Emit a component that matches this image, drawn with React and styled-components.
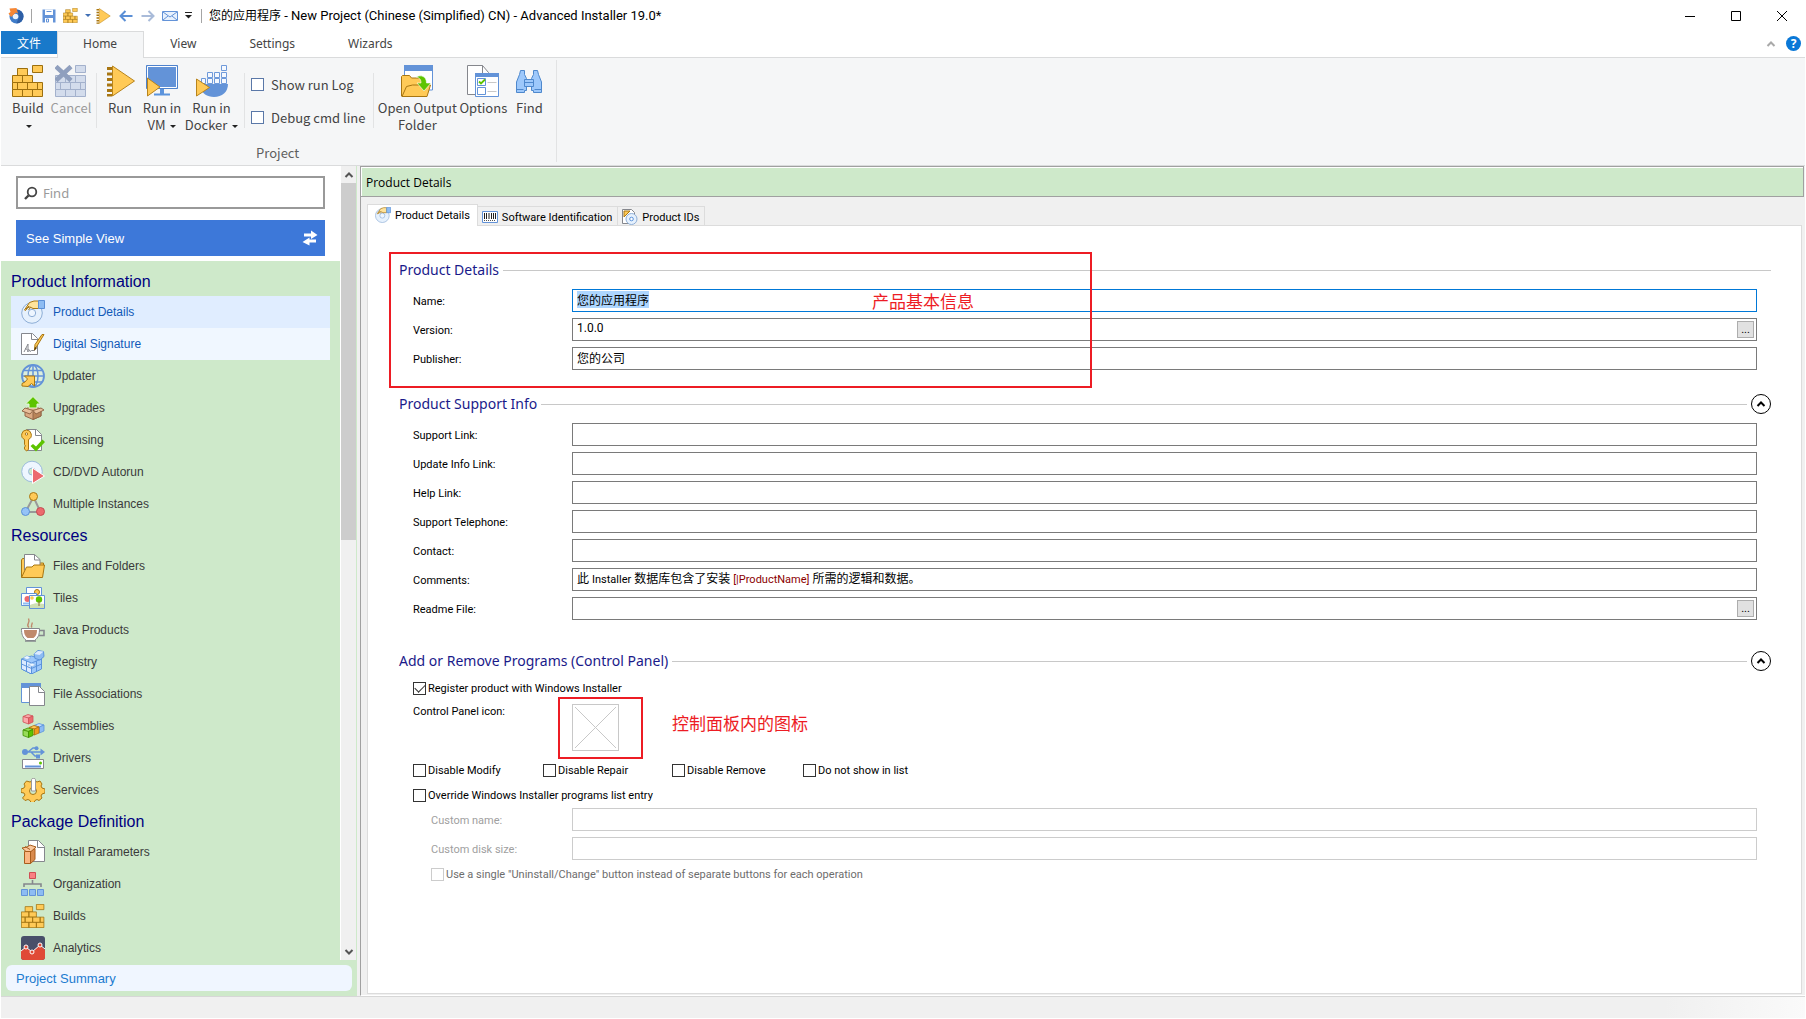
import React, { useEffect, useRef } from 'react'
import styled, { createGlobalStyle, css } from 'styled-components'

const GlobalStyle = createGlobalStyle`
  * { box-sizing: border-box; }

  body {
    margin: 0;
    background: #fff;
    color: #000;
    font-family: Roboto, "Noto Sans CJK SC", sans-serif;
    font-size: 11px;
  }

  button {
    margin: 0;
    padding: 0;
    border: 0;
    background: none;
    color: inherit;
    font: inherit;
  }

  svg { display: block; flex: none; }
`

const GREEN = '#cee9ca'
const BLUE = '#6393d8'
const GOLD = '#ffca57'
const GOLD_DARK = '#a87612'
const GRAY = '#85878d'
const RED = '#ed1c24'

/* ---------- icons ---------- */

function Icon({ size = 24, box = 24, children }) {
  return (
    <svg width={size} height={size} viewBox={`0 0 ${box} ${box}`} fill="none" aria-hidden="true">
      {children}
    </svg>
  )
}

function BricksIcon({ size = 32, fill = GOLD, stroke = '#9c6f0e', crossed }) {
  return (
    <Icon size={size} box={32}>
      <g fill={fill} stroke={stroke}>
        <path d="M20.5 .5h10v7h-10z" />
        {!crossed && <path d="M5.5 3.5h10v7h-10z" />}
        {crossed && <path d="M20.5 10.5h10v7h-10z" />}
        <path d="M.5 10.5h10v7h-10zM10.5 10.5h10v7h-10z" />
        <path d="M.5 17.5h5v7h-5zM5.5 17.5h10v7h-10zM15.5 17.5h10v7h-10zM25.5 17.5h5v7h-5z" />
        <path d="M.5 24.5h10v7h-10zM10.5 24.5h10v7h-10zM20.5 24.5h10v7h-10z" />
      </g>
      {crossed && <path d="M1 1.500l15 14M16 1.500l-15 14" stroke="#8f9fbe" strokeWidth="4.500" />}
    </Icon>
  )
}

function RunIcon({ size = 32 }) {
  return (
    <Icon size={size} box={32}>
      <path d="M3 2h5v3H3zM3 7.500h5v3H3zM3 13h5v3H3zM3 18.500h5v3H3zM3 24h5v3H3zM3 29h5v2.500H3z" fill="#a87612" />
      <path d="M8.500 1l22 15-22 15z" fill={GOLD} stroke="#b8841c" />
    </Icon>
  )
}

const VmIcon = () => (
  <Icon size={32} box={32}>
    <path d="M.5 .5h31v23H.5z" fill={BLUE} stroke="#4f82cc" />
    <path d="M1.500 1.500h29v21h-29z" stroke="#fff" />
    <path d="M14 24h4v5h-4zM8 28.500h16v2H8z" fill="#5b93dc" />
    <path d="M1.500 13l12.500 9-12.500 9z" fill={GOLD} stroke="#b8841c" />
  </Icon>
)

const DockerIcon = () => (
  <Icon size={32} box={32}>
    <path d="M4 19h28c0 8-6 13-14 13-7 0-12-4-14-9z" fill={BLUE} />
    <g fill="#f5f9ff" stroke="#6f9ada">
      <path d="M25.500 .5h5v5h-5zM11.500 7.500h5v5h-5zM18.500 7.500h5v5h-5zM25.500 7.500h5v5h-5z" />
      <path d="M5.500 13.500h4v5h-4zM11.500 13.500h5v5h-5zM18.500 13.500h5v5h-5zM25.500 13.500h5v5h-5z" />
    </g>
    <path d="M.5 14l13 8.500-13 8.500z" fill={GOLD} stroke="#b8841c" />
  </Icon>
)

const OutputIcon = () => (
  <Icon size={32} box={32}>
    <path d="M3.500 1h28v24h-28z" fill="#fff" stroke={BLUE} />
    <path d="M3 0h29v6H3z" fill={BLUE} />
    <path d="M.5 31V11.500l1-1h7l2 2.500h11v18z" fill={GOLD} stroke={GOLD_DARK} />
    <path d="M1 31.500l4.500-10 6-1.500h18l-3.500 11.500z" fill={GOLD} stroke={GOLD_DARK} />
    <path d="M15.500 12c4-2.500 10-1 10 6h4.500l-7 8-7-8h4c0-3-1-5-4.500-6z" fill="#5dc400" stroke="#fff" strokeWidth=".6" />
  </Icon>
)

const OptionsIcon = () => (
  <Icon size={32} box={32}>
    <path d="M.5 .5h15l6 7v22H.5z" fill="#fff" stroke={GRAY} />
    <path d="M15.500 .5v8h6" stroke={GRAY} />
    <path d="M8.500 8.500h23v23h-23z" fill="#fff" stroke={BLUE} />
    <path d="M8 8h24v4H8z" fill={BLUE} />
    <path d="M10.500 13.500h8v7h-8zM10.500 22.500h8v7h-8z" stroke={BLUE} />
    <path d="M12 16.500l2 2 4-4" stroke="#5dc400" strokeWidth="1.800" />
    <path d="M20.500 17.500h9M20.500 26.500h9" stroke="#c8c8c8" />
  </Icon>
)

const BinocularsIcon = () => (
  <Icon size={32} box={32}>
    <g fill="#9dc8fb" stroke="#4e88cd">
      <path d="M8.500 5.500h4v4l2 4v12h-2v2h-8V17l3-7.500z" transform="translate(-1)" />
      <path d="M23.500 5.500h-4v4l-2 4v12h2v2h8V17l-3-7.500z" transform="translate(1)" />
      <path d="M11.500 14.500h9v7h-9z" />
      <path d="M3.500 24.500h7M21.500 24.500h7M11.500 17.500h9" />
    </g>
  </Icon>
)

const DiscHandIcon = ({ size = 24 }) => (
  <Icon size={size}>
    <circle cx="11" cy="13" r="10.300" fill="#e6f1fd" stroke="#8eaed6" />
    <circle cx="11" cy="13" r="3.700" fill="#eef6ff" stroke="#8eaed6" />
    <path d="M3.500 10l5-7.500L13 1h4.500v7.500H12L9 7l-2 .5-2.500 3z" fill="#ffe39b" stroke={GOLD_DARK} />
    <path d="M5 9l3-3M7.500 10l2-2.500" stroke={GOLD_DARK} />
    <path d="M17.500 .5h6v8h-6z" fill="#8dbcf3" stroke="#5b8fd6" />
  </Icon>
)

const SignatureIcon = () => (
  <Icon>
    <path d="M.5 1.500h11l5 5v16H.5z" fill="#fff" stroke={GRAY} />
    <path d="M10.500 1.500v6h6" stroke={GRAY} />
    <path d="M3 20l4-8v8M4 16.500c1 0 3 1 3 3.500M7.500 17l1.500 2.500 1.500-1h3" stroke={GRAY} />
    <path d="M23 2.500L16 14l-2.500 4 .5-5.500L21 2.500z" fill={GOLD} stroke={GOLD_DARK} />
    <path d="M14 15l-1 4 3-3z" fill="#5b3c00" />
  </Icon>
)

const UpdaterIcon = () => (
  <Icon>
    <circle cx="12" cy="12" r="11" stroke={BLUE} strokeWidth="1.800" fill="#dceedd" />
    <ellipse cx="12" cy="12" rx="5" ry="11" stroke={BLUE} strokeWidth="1.500" />
    <path d="M12 1v22M1 12h22M3 6.500h18M3 18h18" stroke={BLUE} strokeWidth="1.500" />
    <path d="M3.500 12h10v10l-3-2.500-3.500 3-6-.5L1 19.500 4 18l2.500-3z" fill={GOLD} stroke={GOLD_DARK} />
  </Icon>
)

const UpgradesIcon = () => (
  <Icon>
    <path d="M4 13l8-3 8 3v7l-8 3.500L4 20z" fill="#dba981" stroke="#93694a" />
    <path d="M12 16l8-3v7l-8 3.500z" fill="#b98459" stroke="#93694a" />
    <path d="M4 12l-3 3 8 3 3-3.500zM20 12l3 2-8 4-3-3.500z" fill="#e8bf9b" stroke="#93694a" />
    <path d="M12 .5L19.500 8H16v4H8V8H4.500z" fill="#5dc400" stroke="#e6f7dc" />
  </Icon>
)

const LicensingIcon = () => (
  <Icon>
    <path d="M5.500 1.500h10l5 5v16h-15z" fill="#fff" stroke={GRAY} />
    <path d="M14.500 1.500v6h6" stroke={GRAY} />
    <path d="M5.500 2a5 5 0 0 1 2 9.500v10l-2 1.500-2-2v-2l1-1-1-1.500v-5A5 5 0 0 1 5.500 2z" fill={GOLD} stroke={GOLD_DARK} />
    <circle cx="5.500" cy="6" r="1.200" fill="#fff" stroke={GOLD_DARK} />
    <path d="M9.500 18l2.500-2 3 2.500 6.500-7 2.500 2.500-9 9.500z" fill="#5dc400" />
  </Icon>
)

const AutorunIcon = () => (
  <Icon>
    <circle cx="11" cy="11.500" r="10.300" fill="#eef6ff" stroke="#9bbbdc" />
    <circle cx="11" cy="11.500" r="3.500" fill={GREEN} stroke="#9bbbdc" />
    <path d="M11.500 8l12 8-12 7.500z" fill="#ec6a6e" stroke="#fff" />
  </Icon>
)

const InstancesIcon = () => (
  <Icon>
    <path d="M12.500 5L4.500 20h15z" stroke="#999" strokeWidth="2" />
    <circle cx="12.500" cy="4.500" r="4" fill={GOLD} stroke={GOLD_DARK} />
    <circle cx="4.500" cy="19.500" r="4" fill="#95c3f7" stroke="#5b8fd6" />
    <circle cx="19.500" cy="19.500" r="4" fill="#ec6a6e" stroke="#c24b50" />
  </Icon>
)

const FilesIcon = () => (
  <Icon>
    <path d="M.5 23V6l1-1.500h4V9h17v5z" fill={GOLD} stroke={GOLD_DARK} />
    <path d="M3.500 16V.5h10l5.500 5v12z" fill="#fff" stroke={GRAY} />
    <path d="M13.500 .5v5.500H19" stroke={GRAY} />
    <path d="M.5 23.500l5-10.500H11l2-2h10.500l-2 12.500z" fill={GOLD} stroke={GOLD_DARK} />
  </Icon>
)

const TilesIcon = () => (
  <Icon>
    <path d="M5.500 1.500h15v11h-15z" fill="#fff" stroke={BLUE} />
    <circle cx="16" cy="6" r="2.500" fill={GOLD} stroke={GOLD_DARK} />
    <path d="M.5 7.500h15v12H.5z" fill="#fff" stroke={BLUE} />
    <circle cx="6.500" cy="13" r="3" fill="#ec6a6e" />
    <path d="M2 16.500h6v2H2z" fill="#8dbcf3" />
    <path d="M8.500 9.500h15v13h-15z" fill="#fff" stroke={BLUE} />
    <path d="M9 19c4-2 9-2 14-1v4H9z" fill="#cfe0b4" />
    <circle cx="11" cy="12" r="1.800" fill={GOLD} />
    <circle cx="18" cy="13.500" r="3.200" fill="#5dc400" />
    <path d="M18 15v5" stroke="#8a6a30" />
  </Icon>
)

const JavaIcon = () => (
  <Icon>
    <path d="M18 12.500h5v5h-5" stroke={GRAY} strokeWidth="1.600" />
    <path d="M.5 10.500h18c0 6-1 9-5 12h-8c-4-3-5-6-5-12z" fill="#fff" stroke={GRAY} />
    <path d="M3 12h13c0 4-1 6-3.500 8h-6C4 18 3 16 3 12z" fill="#c08a6c" />
    <path d="M8 9.500c-4-3 2-4-.5-9M11 9.500c-2-2 1-3 0-5" stroke="#c08a6c" strokeWidth="1.400" />
    <path d="M4 23h11" stroke={GRAY} strokeWidth="1.500" />
  </Icon>
)

const RegistryIcon = () => (
  <Icon>
    <path d="M.5 9l10-3 10 3v10l-10 5-10-5z" fill="#9dc8fb" stroke="#5b93dc" />
    <path d="M.5 9l10 4v11l-10-5z" fill="#dceaff" stroke="#5b93dc" />
    <path d="M10.500 13l10-4M5.500 11v10.500M15.500 11v10.500M.5 14l10 4.500 10-4.500" stroke="#5b93dc" />
    <path d="M2 8l4-2.500L10 8 6 9.500zM7 15l4-2 4 2-4 1.500z" fill="#eef6ff" stroke="#7caee8" strokeWidth=".6" />
    <path d="M13 4l4-3.500 5.500 1 .5 5-4 3.500-5-1.500z" fill="#8dbcf3" stroke="#5b93dc" />
    <path d="M13 4l4-3 5.500 .5L18.500 5z" fill="#dceaff" />
  </Icon>
)

const AssociationsIcon = () => (
  <Icon>
    <path d="M.5 2.500h19v18H.5z" fill="#fff" stroke={BLUE} />
    <path d="M0 1h20v5H0z" fill={BLUE} />
    <path d="M8.500 4.500h10l5 5v14h-15z" fill="#fff" stroke={GRAY} />
    <path d="M17.500 4.500v6h6" stroke={GRAY} />
  </Icon>
)

function Cube({ x, y, light, mid, dark }) {
  return (
    <g transform={`translate(${x} ${y})`} stroke={dark} strokeWidth=".8">
      <path d="M0 2.500L5 .5l5 1.500-5 2z" fill={light} />
      <path d="M0 2.500L5.500 4v6L0 8z" fill={light} />
      <path d="M5.500 4L10 2v6l-4.500 2z" fill={mid} />
    </g>
  )
}

const AssembliesIcon = () => (
  <Icon>
    <Cube x={2} y={0} light="#fba9ab" mid="#ec6a6e" dark="#cf5257" />
    <Cube x={13} y={9} light="#c6dfff" mid="#8dbcf3" dark="#5b93dc" />
    <Cube x={8} y={11} light="#ffca57" mid="#f09a1c" dark="#b56f0c" />
    <Cube x={2} y={13.500} light="#97dc58" mid="#5dc400" dark="#3f8f00" />
  </Icon>
)

const DriversIcon = () => (
  <Icon>
    <path d="M3 6h18M7 6l5-4h4M10 6l4 4h3" stroke={BLUE} strokeWidth="1.500" />
    <circle cx="4" cy="6" r="3" fill={BLUE} />
    <path d="M19.500 2.500L24 6l-4.500 3.500z" fill={BLUE} />
    <circle cx="15.500" cy="2.300" r="2" fill={BLUE} />
    <path d="M15 8.500h4v4h-4z" fill={BLUE} />
    <path d="M1.500 13.500h21v9h-21z" fill="#fff" stroke={GRAY} />
    <path d="M4 19.500h16v2H4z" fill={BLUE} />
    <circle cx="19.500" cy="17" r="1.500" fill="#5dc400" />
  </Icon>
)

const ServicesIcon = () => (
  <Icon>
    <path
      d="M9 4l2-1h3l2 1 3-1 2 3-1 2 1 2 3 1v4l-3 1-1 2 1 2-3 2.500-2-1-2 1-1 2h-3l-1-2-2-1-3 1-2.500-2.500L4 17l-1-2-3-.5V11l3-1 1-2-1-2 2.500-3z"
      fill={GOLD}
      stroke={GOLD_DARK}
    />
    <circle cx="12" cy="13" r="3.500" fill={GREEN} stroke={GOLD_DARK} />
    <path d="M10.500 1.500c0-1.500 4-1.500 4 0V13h-4z" fill="#fff" stroke="#999" />
  </Icon>
)

const ParametersIcon = () => (
  <Icon>
    <path d="M7.500 .5h10l6 6v15h-16z" fill="#fff" stroke={GRAY} />
    <path d="M16.500 .5v7h7" stroke={GRAY} />
    <path d="M3.500 11.500h6v12h-6z" fill="#fbb683" stroke="#a85d1c" />
    <path d="M9.500 11.500L14 8.500v11l-4.500 4z" fill="#d98a4c" stroke="#a85d1c" />
    <path d="M1 8l4 3.500h5l5-4.500-6-2-3 2z" fill="#fbc79d" stroke="#a85d1c" />
    <path d="M4 6.500l5 3" stroke="#a85d1c" />
  </Icon>
)

const OrganizationIcon = () => (
  <Icon>
    <path d="M8.500 .5h6v6h-6z" fill="#fa8083" stroke="#cf4f54" />
    <path d="M11.500 8v4M3 15v-3h17v3" stroke={GRAY} strokeWidth="1.600" />
    <g fill="#8dbcf3" stroke={BLUE}>
      <path d="M.5 17.500h6v6h-6zM8.500 17.500h6v6h-6zM16.500 17.500h6v6h-6z" />
    </g>
  </Icon>
)

const AnalyticsIcon = () => (
  <Icon>
    <rect width="24" height="24" rx="3" fill="#484f69" />
    <path d="M0 15l5-4 6 5 8-7 5 5v7a3 3 0 0 1-3 3H3a3 3 0 0 1-3-3z" fill="#e04a36" />
    <path d="M0 15l5-4 6 5 8-7 5 4" stroke="#fff" />
    <g fill="#e04a36" stroke="#fff">
      <circle cx="5" cy="11" r="2" />
      <circle cx="11" cy="16" r="2" />
      <circle cx="19" cy="9" r="2" />
    </g>
  </Icon>
)

const BarcodeIcon = () => (
  <Icon size={16} box={16}>
    <path d="M.5 2.500h15v11H.5z" fill="#fff" stroke={BLUE} />
    <path d="M2.500 4v6M4.500 4v6M7 4v6M9.500 4v6M11.500 4v6M13.500 4v6" stroke="#222" />
    <path d="M2 11.500h12" stroke="#555" strokeDasharray="1 1" />
  </Icon>
)

const IdsIcon = () => (
  <Icon size={16} box={16}>
    <path d="M.5 .5h9l3 3v11H.5z" fill="#fff" stroke={GRAY} />
    <path d="M2 2h6L2 8z" fill={GOLD} stroke={GOLD_DARK} />
    <circle cx="9.500" cy="10" r="5.500" fill="#e6f1fd" stroke="#8eaed6" />
    <circle cx="9.500" cy="10" r="1.800" fill="#fff" stroke="#5b93dc" />
  </Icon>
)

const AppIcon = () => (
  <Icon size={16} box={16}>
    <circle cx="8.500" cy="8.500" r="7" fill="#3f7cc9" />
    <path d="M8.500 1.500a7 7 0 0 1 7 7 7 7 0 0 1-7 7l2.500-7z" fill="#2e5fa6" />
    <circle cx="7.500" cy="8.500" r="2.800" fill="#e8f1fb" />
    <path d="M1.500 .5l7-.5 1.500 5.500-2-1L3 9 .5 5.500l2-1.500z" fill="#f58634" />
  </Icon>
)

const SaveIcon = () => (
  <Icon size={16} box={16}>
    <path d="M1.500 1.500h13v13h-13z" fill={BLUE} />
    <path d="M4 1.500h8V7H4z" fill="#fff" />
    <path d="M4 10h8v5H4z" fill="#fff" />
    <path d="M5.500 3.500h5M5.500 11h2v3h-2z" stroke={BLUE} />
  </Icon>
)

const ArrowIcon = ({ flip, color }) => (
  <Icon size={16} box={16}>
    <path d={flip ? 'M1.500 8h12M8.500 3l5 5-5 5' : 'M14.500 8h-12M7.500 3l-5 5 5 5'} stroke={color} strokeWidth="2" />
  </Icon>
)

const MailIcon = () => (
  <Icon size={16} box={16}>
    <path d="M.5 3.500h15v9H.5z" fill="#e8f1fd" stroke={BLUE} />
    <path d="M1 4l7 5 7-5M1 12l5-4M15 12l-5-4" stroke={BLUE} />
  </Icon>
)

const SwapIcon = () => (
  <Icon size={16} box={16}>
    <path d="M2 3.500h7V.5l6.500 4.500L9 9V6.500H2zM14 9.500H7.500V7.500L.5 12 7.500 15.500v-3H14z" fill="#fff" />
  </Icon>
)

const SearchIcon = () => (
  <Icon size={14} box={14}>
    <circle cx="8" cy="6" r="4.300" stroke="#444" strokeWidth="1.800" />
    <path d="M4.500 9.500L1 13" stroke="#444" strokeWidth="2.400" />
  </Icon>
)

const ChevronIcon = ({ down, color = '#555', size = 10 }) => (
  <Icon size={size} box={10}>
    <path d={down ? 'M1.500 3L5 6.500 8.500 3' : 'M1.500 7L5 3.500 8.500 7'} stroke={color} strokeWidth="2" />
  </Icon>
)

/* ---------- title bar and ribbon ---------- */

const Window = styled.div`
  display: flex;
  flex-direction: column;
  height: 100vh;
  padding: 0 1px;
`

const TitleBar = styled.header`
  display: flex;
  align-items: center;
  height: 31px;
  flex: none;
  padding-left: 7px;
`

const QuickTools = styled.div`
  display: flex;
  align-items: center;
  height: 28px;
  margin-right: 7px;
`

const QuickButton = styled.button`
  display: flex;
  align-items: center;
  justify-content: center;
  width: ${(p) => p.$width || 21}px;
  height: 24px;
`

const Divider = styled.i`
  width: 1px;
  height: 14px;
  background: #a5a5a5;
  margin: 0 ${(p) => (p.$last ? 0 : 8)}px 0 7px;
`

const Caret = styled.i`
  display: inline-block;
  margin-left: 2px;
  border: 3px solid transparent;
  border-top-color: ${(p) => p.$color || '#222'};
  border-bottom: 0;
  vertical-align: middle;
`

const WindowTitle = styled.h1`
  flex: 1;
  margin: 0;
  font-size: 13px;
  font-weight: 400;
  line-height: 20px;

  span {
    font-size: 12px;
  }
`

const WindowButton = styled.button`
  display: flex;
  align-items: center;
  justify-content: center;
  width: 46px;
  height: 30px;
`

const TabRow = styled.nav`
  display: flex;
  align-items: flex-start;
  height: 27px;
  flex: none;
  border-bottom: 1px solid #dadbdc;
  font-family: "Noto Sans", "Noto Sans CJK SC", sans-serif;
  font-size: 12px;
  color: #444;
`

const FileButton = styled.button`
  width: 56px;
  height: 23px;
  background: #1979ca;
  color: #fff;
`

const RibbonTab = styled.button`
  height: 27px;
  padding: 0 26px 3px 25px;
  border: 1px solid transparent;
  border-bottom: 0;

  ${(p) => p.$active && css`
    border-color: #dadbdc;
    background: #f5f6f7;
  `}
`

const TabRowEnd = styled.div`
  display: flex;
  align-items: center;
  gap: 10px;
  height: 25px;
  margin-left: auto;
  padding-right: 4px;
`

const HelpButton = styled.button`
  width: 15px;
  height: 15px;
  border-radius: 50%;
  background: #0a78d7;
  color: #fff;
  font-size: 12px;
  font-weight: 700;
  line-height: 15px;
`

const Ribbon = styled.div`
  display: flex;
  flex: none;
  height: 108px;
  background: #f5f6f7;
  border-bottom: 1px solid #dadbdc;
  font-family: "Noto Sans CJK SC", "Noto Sans", sans-serif;
  font-size: 13px;
  line-height: 17px;
  color: #444;
`

const RibbonGroup = styled.section`
  display: flex;
  flex-direction: column;
  justify-content: space-between;
  margin: 2px 0 3px;
  padding: 5px 8px 1px 6px;
  border-right: 1px solid #e2e3e4;
`

const GroupTitle = styled.div`
  text-align: center;
  color: #5f5f5f;
`

const Tools = styled.div`
  display: flex;
`

const ToolButton = styled.button`
  display: flex;
  flex-direction: column;
  align-items: center;
  gap: 2px;
  width: ${(p) => p.$width}px;
  white-space: nowrap;
  color: ${(p) => (p.disabled ? '#9b9b9b' : '#444')};

  > span {
    text-align: center;
  }
`

const RibbonDivider = styled.i`
  width: 1px;
  height: 55px;
  margin: 8px ${(p) => p.$right || 5}px 0 ${(p) => p.$left || 3}px;
  background: #e2e3e4;
`

const CheckStack = styled.div`
  display: flex;
  flex-direction: column;
  gap: 13px;
  padding-top: 9px;
  white-space: nowrap;
`

/* ---------- shared form controls ---------- */

const Check = styled.label`
  display: flex;
  align-items: center;
  gap: ${(p) => (p.$ribbon ? 7 : 2)}px;
  min-height: 20px;
  color: ${(p) => (p.$muted ? '#6d6d6d' : 'inherit')};

  input {
    appearance: none;
    flex: none;
    width: 13px;
    height: 13px;
    margin: 0;
    border: 1px solid ${(p) => (p.$muted ? '#ccc' : p.$ribbon ? '#5a78a8' : '#333')};
    background: #fff;
  }

  input:checked::after {
    content: '';
    display: block;
    width: 9px;
    height: 5px;
    margin: 1px;
    border: 1px solid #333;
    border-width: 0 0 1px 1px;
    transform: rotate(-45deg);
  }
`

const TextBox = styled.input`
  width: 100%;
  height: 23px;
  padding: 0 4px 3px;
  border: 1px solid #7a7a7a;
  border-radius: 0;
  outline: 0;
  background: #fff;
  color: #000;
  font: 12px/18px Roboto, "Noto Sans CJK SC", sans-serif;

  &:focus { border-color: #0078d7; }
  &:disabled { border-color: #ccc; }
  &::selection { background: #add6ff; color: #000; }
`

const RichBox = styled.div`
  width: 100%;
  height: 23px;
  padding: 0 4px;
  border: 1px solid #7a7a7a;
  font-size: 12px;
  line-height: 21px;

  span, em {
    font-size: 11px;
    font-style: normal;
  }

  em { color: #8b0000; }
`

/* ---------- sidebar ---------- */

const Body = styled.div`
  display: flex;
  flex: 1;
  min-height: 0;
  background: #f0f0f0;
`

const Sidebar = styled.aside`
  display: flex;
  flex-direction: column;
  width: 356px;
  flex: none;
  margin-right: 3px;
  background: ${GREEN};
  font-family: "Liberation Sans", Arial, sans-serif;
`

const SidebarScroll = styled.div`
  display: flex;
  flex: 1;
  min-height: 0;
`

const SidebarContent = styled.div`
  flex: 1;
  overflow: hidden;
  border-right: 1px solid #fff;
`

const SidebarTop = styled.div`
  display: flex;
  flex-direction: column;
  gap: 11px;
  padding: 10px 15px 5px;
  background: #fff;
`

const SearchBox = styled.label`
  display: flex;
  align-items: center;
  gap: 5px;
  height: 33px;
  padding: 0 6px;
  border: 2px solid #999;

  input {
    flex: 1;
    padding: 0;
    border: 0;
    outline: 0;
    font: 13px "Noto Sans", sans-serif;
  }

  input::placeholder { color: #9a9a9a; }
`

const SimpleViewButton = styled.button`
  display: flex;
  align-items: center;
  justify-content: space-between;
  height: 36px;
  padding: 0 7px 0 10px;
  background: #3d78d9;
  color: #fff;
  font-size: 13px;
`

const NavList = styled.div`
  padding-top: 5px;
`

const NavGroup = styled.div`
  padding: 0 10px;

  h2 {
    height: 30px;
    margin: 0;
    font-size: 16px;
    font-weight: 400;
    line-height: 32px;
    color: #000080;
  }

  ul {
    margin: 0;
    padding: 0;
    list-style: none;
  }
`

const NavItem = styled.a`
  display: flex;
  align-items: center;
  gap: 8px;
  height: 32px;
  padding: 0 10px 1px;
  color: ${(p) => (p.$state ? '#1059b8' : '#3a3a3a')};
  background: ${(p) => ({ selected: '#e0edff', hover: '#f0f7ff' })[p.$state] || 'none'};
  font-size: 12px;
  text-decoration: none;
`

const ScrollBar = styled.div`
  display: flex;
  flex-direction: column;
  width: 15px;
  margin-right: 1px;
  background: #f0f0f0;

  button {
    display: flex;
    align-items: center;
    justify-content: center;
    height: 17px;
  }
`

const ScrollTrack = styled.div`
  flex: 1;

  &::before {
    content: '';
    display: block;
    height: 47%;
    background: #cdcdcd;
  }
`

const SummaryLink = styled.a`
  height: 26px;
  margin: 5px;
  padding: 0 10px;
  border-radius: 6px;
  background: #f0f6ff;
  color: #1c7bd0;
  font-size: 13px;
  line-height: 28px;
  text-decoration: none;
`

/* ---------- main panel ---------- */

const Main = styled.main`
  display: flex;
  flex-direction: column;
  flex: 1;
  min-width: 0;
  padding: 0 1px 1px 0;
  border-left: 1px solid #a0a0a0;
  border-bottom: 1px solid #fff;
`

const PanelTitle = styled.h2`
  flex: none;
  height: 31px;
  margin: 0;
  padding: 0 5px;
  border: 1px solid #a0a0a0;
  border-left: 0;
  background: ${GREEN};
  box-shadow: inset 1px 1px #fff;
  font: 12px/31px "Open Sans", sans-serif;
`

const Tabs = styled.div`
  display: flex;
  align-items: flex-end;
  height: 28px;
  flex: none;
  padding-left: 6px;
`

const Tab = styled.button`
  display: flex;
  align-items: center;
  gap: 4px;
  height: 19px;
  padding: 2px 5px 0 4px;
  border: 1px solid #dcdcdc;
  border-width: 1px 1px 0 0;

  ${(p) => p.$active && css`
    height: 22px;
    margin-bottom: -1px;
    padding: 0 7px 1px;
    border-width: 1px 1px 0 1px;
    background: #fff;
    z-index: 1;
  `}
`

const Page = styled.div`
  flex: 1;
  margin: 0 2px 0 6px;
  padding: 34px 30px 0 31px;
  border: 1px solid #dcdcdc;
  background: #fff;
`

const Section = styled.section`
  position: relative;
  margin-bottom: ${(p) => p.$gap || 24}px;
`

const SectionTitle = styled.h3`
  display: flex;
  align-items: center;
  gap: 4px;
  height: 20px;
  margin: 0 0 ${(p) => p.$gap ?? 9}px;
  color: #1a1a8a;
  font: 14px/20px "Noto Sans", sans-serif;

  &::after {
    content: '';
    order: 1;
    flex: 1;
    height: 1px;
    background: #c8c8c8;
  }

  button {
    display: flex;
    align-items: center;
    justify-content: center;
    order: 2;
    width: 20px;
    height: 20px;
    border: 1px solid #000;
    border-radius: 50%;
  }
`

const Rows = styled.div`
  display: flex;
  flex-direction: column;
  gap: 6px;
  padding: 0 14px;
`

const Row = styled.div`
  display: grid;
  grid-template-columns: ${(p) => (p.$nested ? 141 : 159)}px 1fr;
  align-items: center;
  padding-left: ${(p) => (p.$nested ? 18 : 0)}px;
  color: ${(p) => (p.$nested ? '#a0a0a0' : '#000')};
  line-height: 15px;

  > label, > span {
    padding-top: 1px;
  }
`

const BoxWithButton = styled.div`
  position: relative;
`

const BrowseButton = styled.button`
  position: absolute;
  top: 3px;
  right: 3px;
  width: 17px;
  height: 17px;
  border: 1px solid #adadad;
  background: #e1e1e1;
  line-height: 15px;
`

const Options = styled.div`
  padding: 0 14px;
  margin-bottom: 3px;
`

const OptionRow = styled.div`
  display: grid;
  grid-template-columns: 130px 129px 131px 1fr;
  height: 20px;
  margin-bottom: 5px;
  white-space: nowrap;
`

const NestedOptions = styled(Options)`
  margin-top: 4px;
  padding-left: 32px;
`

const IconRow = styled.div`
  display: flex;
  padding: 6px 0 9px;

  > span {
    width: 159px;
    line-height: 15px;
  }
`

const IconPicker = styled.button`
  position: relative;
  width: 47px;
  height: 47px;
  border: 1px solid #c8c8c8;
`

const Highlight = styled.i`
  position: absolute;
  border: 2px solid ${RED};
  pointer-events: none;
`

const DetailsHighlight = styled(Highlight)`
  top: -8px;
  left: -10px;
  width: 703px;
  height: 136px;
`

const IconHighlight = styled(Highlight)`
  top: -8px;
  left: -15px;
  width: 85px;
  height: 62px;
`

const Note = styled.p`
  margin: 0;
  color: ${RED};
  font: 17px/24px "Noto Sans CJK SC", sans-serif;
`

const DetailsNote = styled(Note)`
  position: absolute;
  top: 29px;
  left: 473px;
  pointer-events: none;
`

const IconNote = styled(Note)`
  margin: 7px 0 0 53px;
`

const StatusBar = styled.footer`
  flex: none;
  height: 23px;
  border-top: 1px solid #d7d7d7;
  border-bottom: 1px solid #fff;
  background: linear-gradient(to right, #f0f0f0 calc(100% - 140px), #fafafa);
`

const navGroups = [
  {
    title: 'Product Information',
    items: [
      ['Product Details', DiscHandIcon, 'selected'],
      ['Digital Signature', SignatureIcon, 'hover'],
      ['Updater', UpdaterIcon],
      ['Upgrades', UpgradesIcon],
      ['Licensing', LicensingIcon],
      ['CD/DVD Autorun', AutorunIcon],
      ['Multiple Instances', InstancesIcon],
    ],
  },
  {
    title: 'Resources',
    items: [
      ['Files and Folders', FilesIcon],
      ['Tiles', TilesIcon],
      ['Java Products', JavaIcon],
      ['Registry', RegistryIcon],
      ['File Associations', AssociationsIcon],
      ['Assemblies', AssembliesIcon],
      ['Drivers', DriversIcon],
      ['Services', ServicesIcon],
    ],
  },
  {
    title: 'Package Definition',
    items: [
      ['Install Parameters', ParametersIcon],
      ['Organization', OrganizationIcon],
      ['Builds', () => <BricksIcon size={24} />],
      ['Analytics', AnalyticsIcon],
    ],
  },
]

const supportFields = ['Support Link', 'Update Info Link', 'Help Link', 'Support Telephone', 'Contact']

function Field({ id, label, value, browse, nested, inputRef }) {
  const box = <TextBox id={id} ref={inputRef} defaultValue={value} disabled={nested} />
  return (
    <Row $nested={nested}>
      <label htmlFor={id}>{label}:</label>
      {browse ? (
        <BoxWithButton>
          {box}
          <BrowseButton aria-label={`Browse ${label}`}>...</BrowseButton>
        </BoxWithButton>
      ) : box}
    </Row>
  )
}

function Header() {
  return (
    <>
      <TitleBar>
        <QuickTools>
          <AppIcon />
          <Divider />
          <QuickButton aria-label="Save" $width={18}><SaveIcon /></QuickButton>
          <QuickButton aria-label="Build" $width={24}><BricksIcon size={15} /></QuickButton>
          <QuickButton aria-label="Build options" $width={9}><Caret $color="#3f6fb5" /></QuickButton>
          <QuickButton aria-label="Run" $width={24}><RunIcon size={16} /></QuickButton>
          <QuickButton aria-label="Back" $width={22}><ArrowIcon color="#5b8fd6" /></QuickButton>
          <QuickButton aria-label="Forward"><ArrowIcon flip color="#a9bbd9" /></QuickButton>
          <QuickButton aria-label="Mail" $width={24}><MailIcon /></QuickButton>
          <QuickButton aria-label="Customize" $width={12}>
            <Icon size={7} box={7}><path d="M0 .5h7" stroke="#222" /><path d="M0 3h7L3.500 6.500z" fill="#222" /></Icon>
          </QuickButton>
          <Divider $last />
        </QuickTools>
        <WindowTitle><span>您的应用程序</span> - New Project (Chinese (Simplified) CN) - Advanced Installer 19.0*</WindowTitle>
        <WindowButton aria-label="Minimize">
          <Icon size={10} box={10}><path d="M0 5.500h10" stroke="#000" /></Icon>
        </WindowButton>
        <WindowButton aria-label="Maximize">
          <Icon size={10} box={10}><path d="M.5 .5h9v9h-9z" stroke="#000" /></Icon>
        </WindowButton>
        <WindowButton aria-label="Close">
          <Icon size={10} box={10}><path d="M0 0l10 10M10 0L0 10" stroke="#000" /></Icon>
        </WindowButton>
      </TitleBar>

      <TabRow>
        <FileButton>文件</FileButton>
        <RibbonTab $active>Home</RibbonTab>
        <RibbonTab>View</RibbonTab>
        <RibbonTab>Settings</RibbonTab>
        <RibbonTab>Wizards</RibbonTab>
        <TabRowEnd>
          <button aria-label="Collapse ribbon"><ChevronIcon color="#a9a9a9" /></button>
          <HelpButton aria-label="Help">?</HelpButton>
        </TabRowEnd>
      </TabRow>

      <Ribbon>
        <RibbonGroup>
          <Tools>
            <ToolButton $width={42}><BricksIcon /><span>Build<br /><Caret /></span></ToolButton>
            <ToolButton $width={44} disabled>
              <BricksIcon crossed fill="#d3dcec" stroke="#a3b1cc" /><span>Cancel</span>
            </ToolButton>
            <RibbonDivider />
            <ToolButton $width={36}><RunIcon /><span>Run</span></ToolButton>
            <ToolButton $width={48}><VmIcon /><span>Run in<br />VM <Caret /></span></ToolButton>
            <ToolButton $width={51}><DockerIcon /><span>Run in<br />Docker <Caret /></span></ToolButton>
            <RibbonDivider $left={7} $right={6} />
            <CheckStack>
              <Check $ribbon><input type="checkbox" />Show run Log</Check>
              <Check $ribbon><input type="checkbox" />Debug cmd line</Check>
            </CheckStack>
            <RibbonDivider $left={8} $right={4} />
            <ToolButton $width={78}><OutputIcon /><span>Open Output<br />Folder</span></ToolButton>
            <ToolButton $width={54}><OptionsIcon /><span>Options</span></ToolButton>
            <ToolButton $width={38}><BinocularsIcon /><span>Find</span></ToolButton>
          </Tools>
          <GroupTitle>Project</GroupTitle>
        </RibbonGroup>
      </Ribbon>
    </>
  )
}

function SideNav() {
  return (
    <Sidebar>
      <SidebarScroll>
        <SidebarContent>
          <SidebarTop>
            <SearchBox>
              <SearchIcon />
              <input type="text" placeholder="Find" aria-label="Find" />
            </SearchBox>
            <SimpleViewButton>See Simple View<SwapIcon /></SimpleViewButton>
          </SidebarTop>
          <NavList>
            {navGroups.map((group) => (
              <NavGroup key={group.title}>
                <h2>{group.title}</h2>
                <ul>
                  {group.items.map(([label, ItemIcon, state]) => (
                    <li key={label}>
                      <NavItem href="#" $state={state}><ItemIcon />{label}</NavItem>
                    </li>
                  ))}
                </ul>
              </NavGroup>
            ))}
          </NavList>
        </SidebarContent>
        <ScrollBar>
          <button aria-label="Scroll up"><ChevronIcon /></button>
          <ScrollTrack />
          <button aria-label="Scroll down"><ChevronIcon down /></button>
        </ScrollBar>
      </SidebarScroll>
      <SummaryLink href="#">Project Summary</SummaryLink>
    </Sidebar>
  )
}

function ProductDetails() {
  const nameRef = useRef(null)

  useEffect(() => {
    nameRef.current.focus()
    nameRef.current.select()
  }, [])

  return (
    <Main>
      <PanelTitle>Product Details</PanelTitle>
      <Tabs role="tablist">
        <Tab role="tab" aria-selected $active><DiscHandIcon size={16} />Product Details</Tab>
        <Tab role="tab"><BarcodeIcon />Software Identification</Tab>
        <Tab role="tab"><IdsIcon />Product IDs</Tab>
      </Tabs>
      <Page>
        <Section>
          <SectionTitle>Product Details</SectionTitle>
          <Rows>
            <Field id="name" label="Name" value="您的应用程序" inputRef={nameRef} />
            <Field id="version" label="Version" value="1.0.0" browse />
            <Field id="publisher" label="Publisher" value="您的公司" />
          </Rows>
          <DetailsHighlight />
          <DetailsNote>产品基本信息</DetailsNote>
        </Section>

        <Section $gap={31}>
          <SectionTitle>
            Product Support Info
            <button aria-label="Collapse Product Support Info"><ChevronIcon color="#000" /></button>
          </SectionTitle>
          <Rows>
            {supportFields.map((label) => (
              <Field key={label} id={label.toLowerCase().replaceAll(' ', '-')} label={label} />
            ))}
            <Row>
              <span id="comments-label">Comments:</span>
              <RichBox role="textbox" aria-labelledby="comments-label" contentEditable suppressContentEditableWarning>
                此 <span>Installer</span> 数据库包含了安装 <em>[|ProductName]</em> 所需的逻辑和数据。
              </RichBox>
            </Row>
            <Field id="readme" label="Readme File" browse />
          </Rows>
        </Section>

        <Section>
          <SectionTitle $gap={7}>
            Add or Remove Programs (Control Panel)
            <button aria-label="Collapse Add or Remove Programs"><ChevronIcon color="#000" /></button>
          </SectionTitle>
          <Options>
            <Check><input type="checkbox" defaultChecked />Register product with Windows Installer</Check>
            <IconRow>
              <span>Control Panel icon:</span>
              <IconPicker aria-label="Control Panel icon">
                <Icon size={45} box={45}><path d="M2 2l41 41M43 2L2 43" stroke="#c8c8c8" /></Icon>
                <IconHighlight />
              </IconPicker>
              <IconNote>控制面板内的图标</IconNote>
            </IconRow>
            <OptionRow>
              <Check><input type="checkbox" />Disable Modify</Check>
              <Check><input type="checkbox" />Disable Repair</Check>
              <Check><input type="checkbox" />Disable Remove</Check>
              <Check><input type="checkbox" />Do not show in list</Check>
            </OptionRow>
            <Check><input type="checkbox" />Override Windows Installer programs list entry</Check>
          </Options>
          <Rows>
            <Field id="custom-name" label="Custom name" nested />
            <Field id="custom-size" label="Custom disk size" nested />
          </Rows>
          <NestedOptions>
            <Check $muted>
              <input type="checkbox" disabled />
              Use a single "Uninstall/Change" button instead of separate buttons for each operation
            </Check>
          </NestedOptions>
        </Section>
      </Page>
    </Main>
  )
}

export default function App() {
  return (
    <>
      <GlobalStyle />
      <Window>
        <Header />
        <Body>
          <SideNav />
          <ProductDetails />
        </Body>
        <StatusBar />
      </Window>
    </>
  )
}
